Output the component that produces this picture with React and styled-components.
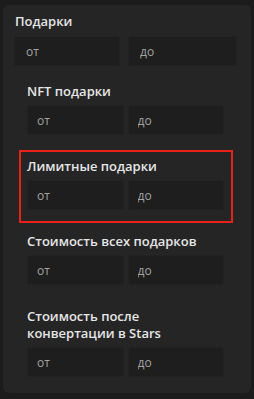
import React from 'react';
import styled, { createGlobalStyle } from 'styled-components';

const GlobalStyle = createGlobalStyle`
  html, body {
    margin: 0;
    padding: 0;
    background: #1c1c1c;
    font-family: 'Open Sans', 'Noto Sans', sans-serif;
  }
`;

const Page = styled.div`
  padding: 5px 3px 9px 3px;
`;

const Panel = styled.div`
  background: #252525;
  border-radius: 6px;
  padding: 8px 14px 3px 11px;
`;

const Title = styled.div`
  font-size: 13px;
  line-height: 17px;
  font-weight: 600;
  color: #e6e6e6;
  padding-left: ${(p) => (p.$nested ? '0' : '1px')};
  margin-bottom: ${(p) => (p.$nested ? '5px' : '6px')};
`;

const Range = styled.div`
  display: grid;
  grid-template-columns: ${(p) => (p.$nested ? '1fr 1fr' : '106px 1fr')};
  gap: ${(p) => (p.$nested ? '4px' : '8px')};
`;

const Field = styled.input`
  box-sizing: border-box;
  width: 100%;
  min-width: 0;
  height: 30px;
  margin: 0;
  padding: 0 ${(p) => (p.$nested ? '9px' : '11px')};
  border: 1px solid #222222;
  border-radius: 2px;
  background: #1e1e1e;
  color: #e0e0e0;
  font-family: inherit;
  font-size: 12px;
  outline: none;
  &::placeholder {
    color: #a2a2a2;
  }
`;

const Group = styled.div`
  margin: ${(p) => (p.$first ? '9px' : '2px')} 4px 0 5px;
  padding: 6px 7px 11px 6px;
  border: 2px solid ${(p) => (p.$active ? '#e8221b' : 'transparent')};
`;

const RangeInputs = ({ nested }) => (
  <Range $nested={nested}>
    <Field $nested={nested} placeholder="от" />
    <Field $nested={nested} placeholder="до" />
  </Range>
);

const groups = [
  { title: 'NFT подарки' },
  { title: 'Лимитные подарки', active: true },
  { title: 'Стоимость всех подарков' },
  { title: <>Стоимость после<br />конвертации в Stars</> },
];

export default function App() {
  return (
    <>
      <GlobalStyle />
      <Page>
        <Panel>
          <Title>Подарки</Title>
          <RangeInputs />
          {groups.map((g, i) => (
            <Group key={i} $first={i === 0} $active={g.active}>
              <Title $nested>{g.title}</Title>
              <RangeInputs nested />
            </Group>
          ))}
        </Panel>
      </Page>
    </>
  );
}
